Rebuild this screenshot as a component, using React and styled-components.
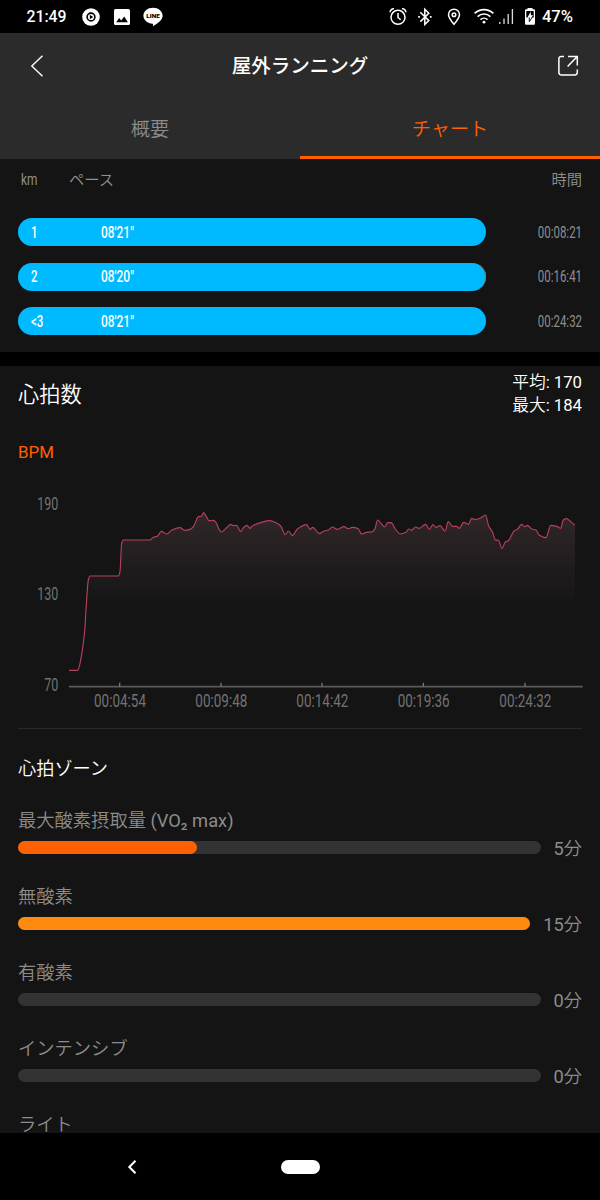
import React from "react";

//SC
import styled, { createGlobalStyle } from "styled-components";

const GlobalStyle = createGlobalStyle`
  * {
    box-sizing: border-box;
  }
  body {
    margin: 0;
    background-color: #000;
    font-family: Roboto, "Noto Sans CJK JP DemiLight", "Noto Sans CJK JP", sans-serif;
  }
`;

const Screen = styled.div`
  display: flex;
  flex-direction: column;
  width: 600px;
  height: 1200px;
  overflow: hidden;
  background-color: #141414;
  color: #fff;
`;

//STATUS BAR
const StatusBar = styled.div`
  display: flex;
  align-items: center;
  justify-content: space-between;
  flex: none;
  height: 33px;
  padding: 1px 27px 0 26.5px;
  background-color: #000;
`;

const StatusGroup = styled.div`
  display: flex;
  align-items: center;
`;

const StatusText = styled.span`
  margin-left: ${(props) => props.$gap || 0}px;
  font-size: ${(props) => props.$size || 15.8}px;
  font-weight: 500;
  line-height: 20px;
`;

const StatusIcon = styled.svg`
  display: block;
  width: ${(props) => props.width}px;
  height: 20px;
  margin-left: ${(props) => props.$gap || 0}px;
`;

//HEADER
const Header = styled.div`
  flex: none;
  height: 126px;
  background-color: #2b2b2b;
`;

const TitleBar = styled.div`
  display: flex;
  align-items: center;
  justify-content: space-between;
  height: 65px;
  padding: 0 20px;
`;

const Title = styled.h1`
  margin: 0;
  padding-top: 2px;
  font-family: Roboto, "Noto Sans CJK JP", sans-serif;
  font-size: 19.5px;
  font-weight: 500;
  line-height: 26px;
`;

const Tabs = styled.div`
  display: flex;
  height: 61px;
`;

const Tab = styled.div`
  display: flex;
  align-items: center;
  justify-content: center;
  flex: 1;
  padding-top: 1px;
  font-size: 19.2px;
  color: ${(props) => (props.$active ? "#ff6100" : "#8c8c8c")};
  border-bottom: 3px solid ${(props) => (props.$active ? "#ff6100" : "#2b2b2b")};
`;

//LAPS
const Laps = styled.div`
  flex: none;
  height: 192.5px;
  padding: 0 18px;
`;

const LapHead = styled.div`
  display: flex;
  align-items: center;
  height: 38px;
  margin-bottom: 21.3px;
  padding-left: 3px;
  font-size: 15.3px;
  color: #909090;
`;

const HeadKm = styled.div`
  width: 48px;
  padding-top: 3px;
`;

const HeadTime = styled.div`
  margin-left: auto;
`;

const LapRow = styled.div`
  display: flex;
  align-items: center;
  justify-content: space-between;
  margin-bottom: 16.5px;
`;

const LapBar = styled.div`
  display: flex;
  align-items: center;
  width: 467.5px;
  height: 28px;
  padding-left: 13px;
  border-radius: 14px;
  background-color: #00baff;
  ${(props) => props.$short && "box-shadow: inset -1px 0 0 #777;"}
`;

const LapIndex = styled.div`
  width: 70px;
`;

// narrow digits, squeezed from the regular face
const Narrow = styled.span`
  display: inline-block;
  padding-top: 1px;
  font-size: ${(props) => props.$size || 16.6}px;
  font-weight: ${(props) => props.$weight || 400};
  line-height: 20px;
  color: ${(props) => props.$color || "#fff"};
  transform: scaleX(${(props) => props.$scale || 0.69});
  transform-origin: ${(props) => props.$origin || "left"} center;
`;

const Separator = styled.div`
  flex: none;
  height: 14px;
  background-color: #000;
`;

//HEART RATE
const HeartRate = styled.div`
  display: flex;
  flex-direction: column;
  flex: 1;
  min-height: 0;
  overflow: hidden;
`;

const HeartHead = styled.div`
  display: flex;
  justify-content: space-between;
  flex: none;
  height: 74px;
  padding: 6.5px 18px 0;
`;

const HeartTitle = styled.h2`
  margin: 8px 0 0;
  font-size: 21.2px;
  font-weight: 400;
  line-height: 30px;
`;

const Stats = styled.div`
  font-size: 16.7px;
  line-height: 22.6px;
  text-align: right;
`;

const Unit = styled.div`
  flex: none;
  height: 40.5px;
  padding-left: 18px;
  font-size: 16.9px;
  line-height: 24px;
  color: #ff6100;
`;

const Chart = styled.svg`
  display: block;
  flex: none;
  width: 600px;
  height: 240px;
`;

const Divider = styled.div`
  flex: none;
  height: 1px;
  margin: 8px 18px 0;
  background-color: #292929;
`;

//ZONES
const Zones = styled.div`
  flex: none;
  padding: 26.5px 18px 0;
`;

const ZonesTitle = styled.h3`
  margin: 0 0 25px;
  font-size: 18.2px;
  font-weight: 400;
  line-height: 26px;
`;

const Zone = styled.div`
  height: 76px;
`;

const ZoneLabel = styled.div`
  height: 27px;
  font-size: 18.3px;
  line-height: 27px;
  color: #8c8c8c;
`;

const ZoneLine = styled.div`
  display: flex;
  align-items: center;
  height: 26px;
  margin-top: 2px;
`;

const Track = styled.div`
  flex: 1;
  height: 12.5px;
  margin-top: -2.5px;
  border-radius: 7px;
  background-color: #333;
`;

const Fill = styled.div`
  height: 100%;
  border-radius: 7px;
  background-color: ${(props) => props.color};
`;

const ZoneValue = styled.div`
  margin-left: 13px;
  font-size: 18.2px;
  line-height: 26px;
  color: #8c8c8c;
`;

//NAVIGATION
const NavBar = styled.div`
  display: grid;
  grid-template-columns: 264px 72px 264px;
  align-items: center;
  justify-items: center;
  flex: none;
  height: 67px;
  background-color: #000;
`;

const HomePill = styled.div`
  width: 39px;
  height: 14px;
  border-radius: 7px;
  background-color: #fff;
`;

const laps = [
  { index: "1", pace: "08'21\"", time: "00:08:21" },
  { index: "2", pace: "08'20\"", time: "00:16:41", short: true },
  { index: "<3", pace: "08'21\"", time: "00:24:32" },
];

const zones = [
  { label: "最大酸素摂取量 (VO₂ max)", value: "5分", percent: 34.2, color: "#ff6100" },
  { label: "無酸素", value: "15分", percent: 100, color: "#ff8a10" },
  { label: "有酸素", value: "0分", percent: 0 },
  { label: "インテンシブ", value: "0分", percent: 0 },
  { label: "ライト" },
];

// the chart is drawn in a 1800 x 720 box, three units for each pixel
const points = [
  [207, 571], [233, 571], [240, 550], [254, 455], [258, 390], [265, 300], [270, 288],
  [355, 288], [360, 275], [365, 190], [370, 180], [450, 180], [460, 172], [472, 169],
  [484, 154], [500, 162], [516, 150], [540, 143], [554, 151], [570, 148], [580, 140],
  [595, 110], [605, 108], [611, 98], [616, 104], [627, 122], [640, 121], [648, 127],
  [657, 148], [664, 156], [677, 146], [692, 133], [700, 137], [710, 136], [722, 155],
  [730, 143], [741, 136], [750, 145], [758, 137], [785, 127], [808, 122], [825, 127],
  [842, 138], [856, 164], [865, 153], [877, 167], [892, 147], [920, 134], [930, 148],
  [938, 142], [958, 161], [970, 154], [985, 150], [997, 141], [1012, 148], [1032, 140],
  [1045, 146], [1057, 142], [1075, 146], [1084, 162], [1100, 157], [1115, 156],
  [1124, 148], [1133, 120], [1143, 130], [1154, 141], [1163, 128], [1173, 128],
  [1188, 150], [1201, 162], [1218, 157], [1226, 147], [1234, 151], [1247, 141],
  [1257, 145], [1277, 133], [1288, 148], [1299, 134], [1308, 142], [1320, 137],
  [1335, 153], [1345, 125], [1358, 139], [1370, 139], [1378, 145], [1391, 127],
  [1405, 133], [1415, 115], [1425, 119], [1440, 115], [1457, 105], [1466, 138],
  [1477, 155], [1487, 181], [1495, 180], [1506, 205], [1516, 186], [1525, 182],
  [1543, 152], [1552, 148], [1565, 133], [1574, 140], [1582, 136], [1595, 147],
  [1608, 150], [1617, 165], [1638, 173], [1652, 136], [1670, 139], [1682, 145],
  [1690, 120], [1700, 116], [1710, 123], [1725, 135],
];

const slope = (i) => {
  const prev = points[i - 1];
  const cur = points[i];
  const next = points[i + 1];
  if (!prev || !next) return 0;
  const before = (cur[1] - prev[1]) / (cur[0] - prev[0]);
  const after = (next[1] - cur[1]) / (next[0] - cur[0]);
  if (before * after <= 0) return 0;
  return (2 * before * after) / (before + after);
};

const line = points
  .map(([x, y], i) => {
    if (i === 0) return `M${x} ${y}`;
    const [px, py] = points[i - 1];
    const third = (x - px) / 3;
    return `C${px + third} ${py + slope(i - 1) * third} ${x - third} ${y - slope(i) * third} ${x} ${y}`;
  })
  .join("");

const ticks = [
  { x: 359, label: "00:04:54" },
  { x: 663, label: "00:09:48" },
  { x: 966, label: "00:14:42" },
  { x: 1270, label: "00:19:36" },
  { x: 1575, label: "00:24:32" },
];

const levels = [
  { y: 91, x: 112, width: 63, label: "190" },
  { y: 361, x: 112, width: 63, label: "130" },
  { y: 632, x: 133, width: 42, label: "70" },
];

const HeartChart = () => (
  <Chart viewBox="0 0 1800 720">
    <defs>
      <linearGradient id="area" gradientUnits="userSpaceOnUse" x1="0" y1="98" x2="0" y2="390">
        <stop offset="0" stopColor="#302729" />
        <stop offset="1" stopColor="#141414" />
      </linearGradient>
    </defs>
    <path d={`${line}V390H260Z`} fill="url(#area)" />
    <path d={line} fill="none" stroke="#b9405a" strokeWidth="3.4" strokeLinejoin="round" />
    <path d="M207 620H1748" stroke="#5a5a5a" strokeWidth="5" />
    {ticks.map((tick) => (
      <g key={tick.label}>
        <path d={`M${tick.x} 608v12`} stroke="#777" strokeWidth="4" />
        <text
          x={tick.x - 77}
          y="680"
          fontSize="57"
          fill="#727272"
          textLength="156"
          lengthAdjust="spacingAndGlyphs"
        >
          {tick.label}
        </text>
      </g>
    ))}
    {levels.map((level) => (
      <text
        key={level.label}
        x={level.x}
        y={level.y}
        fontSize="57"
        fill="#727272"
        textLength={level.width}
        lengthAdjust="spacingAndGlyphs"
      >
        {level.label}
      </text>
    ))}
  </Chart>
);

const StatusLeft = () => (
  <StatusGroup>
    <StatusText>21:49</StatusText>
    <StatusIcon width={18} $gap={15.5} viewBox="0 0 18 20">
      <circle cx="9" cy="10" r="8.8" fill="#fff" />
      <circle cx="9" cy="10" r="3.9" fill="none" stroke="#000" strokeWidth="1.6" />
      <path d="M7.8 7.8v4.4l3.4-2.2z" fill="#000" />
    </StatusIcon>
    <StatusIcon width={16} $gap={14} viewBox="0 0 16 20">
      <rect x="0" y="2" width="16" height="16" rx="1.6" fill="#fff" />
      <path d="M2.2 15.2l3-4.1 2 2.5 3-4 3.7 5.6z" fill="#000" />
    </StatusIcon>
    <StatusIcon width={20} $gap={12.5} viewBox="0 0 20 20">
      <path
        d="M10 .8c5.3 0 9.6 3.5 9.6 7.9 0 3.7-4.1 7.5-9.6 10.5-.3-.5.5-2.2-.3-2.5C4.5 16.4.4 13 .4 8.7.4 4.3 4.7.8 10 .8z"
        fill="#fff"
      />
      <text x="3.3" y="10.8" fontSize="5.4" fontWeight="900" textLength="13.4" lengthAdjust="spacingAndGlyphs">
        LINE
      </text>
    </StatusIcon>
  </StatusGroup>
);

const StatusRight = () => (
  <StatusGroup>
    <StatusIcon width={18} viewBox="0 0 18 20" fill="none" stroke="#fff" strokeWidth="1.5">
      <circle cx="9" cy="10.3" r="7" />
      <path d="M9 6v4.5l2.7 2.3M1 5.2C1.2 3 3 1.5 5 1.8M17 5.2C16.8 3 15 1.5 13 1.8" />
    </StatusIcon>
    <StatusIcon width={16} $gap={10} viewBox="0 0 16 20" fill="none" stroke="#fff" strokeWidth="1.5">
      <path d="M3.3 5.2l8.5 8.4-4 3.9V2.3l4 3.9-8.5 8.4" />
      <path d="M1.2 9.9h1.7M12.9 9.9h1.7" strokeWidth="1.7" />
    </StatusIcon>
    <StatusIcon width={14} $gap={13.5} viewBox="0 0 14 20" fill="none" stroke="#fff" strokeWidth="1.5">
      <path d="M7 17.3C4 13.7 1.5 10.6 1.5 7.7a5.5 5.5 0 0 1 11 0c0 2.9-2.5 6-5.5 9.6z" />
      <circle cx="7" cy="7.7" r="1.8" />
    </StatusIcon>
    <StatusIcon width={20} $gap={13.5} viewBox="0 0 20 20" fill="none" stroke="#fff" strokeWidth="1.6">
      <path d="M.6 6.4c5.4-5 13.4-5 18.8 0M3.6 9.6c3.7-3.4 9.1-3.4 12.8 0M6.5 12.6c2-1.9 5-1.9 7 0" />
      <circle cx="10" cy="15.2" r="1.4" fill="#fff" stroke="none" />
    </StatusIcon>
    <StatusIcon width={15} $gap={5} viewBox="0 0 15 20" fill="none" stroke="#ddd" strokeWidth="1.3">
      <path d="M.8 15v2M5 11.5V17M9.2 7v10M13.4 2v15" />
    </StatusIcon>
    <StatusIcon width={12} $gap={9.5} viewBox="0 0 12 20">
      <path
        d="M3.5 1h5v1.3h1.2c.8 0 1.3.5 1.3 1.3v12.9c0 .8-.5 1.3-1.3 1.3H2.3c-.8 0-1.3-.5-1.3-1.3V3.6c0-.8.5-1.3 1.3-1.3h1.2z"
        fill="#fff"
      />
      <path d="M2.3 4h7.4v6.5H2.3z" fill="#000" />
      <path d="M6.8 4.6L3.3 10.8h2v2.4h1L9 8.2H6.8z" fill="#fff" />
      <path d="M5.3 10.5v4.2l3.4-5.2" fill="none" stroke="#000" strokeWidth=".9" />
    </StatusIcon>
    <StatusText $gap={6} $size={16.6}>47%</StatusText>
  </StatusGroup>
);

const App = () => {
  return (
    <Screen>
      <GlobalStyle />
      <StatusBar>
        <StatusLeft />
        <StatusRight />
      </StatusBar>

      <Header>
        <TitleBar>
          <svg width="24" height="24" viewBox="0 0 24 24" fill="none" stroke="#fff" strokeWidth="1.4">
            <path d="M22.5 1.7L11.8 11.9l10.7 10.4" />
          </svg>
          <Title>屋外ランニング</Title>
          <svg width="24" height="24" viewBox="0 0 24 24" fill="none" stroke="#fff" strokeWidth="1.5">
            <path d="M8 2.4H5.2a2.3 2.3 0 0 0-2.3 2.3v13.9a2.3 2.3 0 0 0 2.3 2.3H19a2.3 2.3 0 0 0 2.3-2.3v-3.1" />
            <path d="M12 2.4h9.3v9.2M21 2.7l-9.4 9.7" />
          </svg>
        </TitleBar>
        <Tabs>
          <Tab>概要</Tab>
          <Tab $active>チャート</Tab>
        </Tabs>
      </Header>

      <Laps>
        <LapHead>
          <HeadKm>
            <Narrow $color="#909090" $size={16.5} $scale={0.72}>km</Narrow>
          </HeadKm>
          <div>ペース</div>
          <HeadTime>時間</HeadTime>
        </LapHead>
        {laps.map((lap) => (
          <LapRow key={lap.index}>
            <LapBar $short={lap.short}>
              <LapIndex>
                <Narrow $weight={500}>{lap.index}</Narrow>
              </LapIndex>
              <Narrow $weight={500} $scale={0.72}>{lap.pace}</Narrow>
            </LapBar>
            <Narrow $color="#8f8f8f" $origin="right">{lap.time}</Narrow>
          </LapRow>
        ))}
      </Laps>

      <Separator />

      <HeartRate>
        <HeartHead>
          <HeartTitle>心拍数</HeartTitle>
          <Stats>
            <div>平均: 170</div>
            <div>最大: 184</div>
          </Stats>
        </HeartHead>
        <Unit>BPM</Unit>
        <HeartChart />
        <Divider />
        <Zones>
          <ZonesTitle>心拍ゾーン</ZonesTitle>
          {zones.map((zone) => (
            <Zone key={zone.label}>
              <ZoneLabel>{zone.label}</ZoneLabel>
              {zone.value && (
                <ZoneLine>
                  <Track>
                    {zone.percent > 0 && <Fill color={zone.color} style={{ width: `${zone.percent}%` }} />}
                  </Track>
                  <ZoneValue>{zone.value}</ZoneValue>
                </ZoneLine>
              )}
            </Zone>
          ))}
        </Zones>
      </HeartRate>

      <NavBar>
        <svg width="12" height="16" viewBox="0 0 12 16" fill="none" stroke="#fff" strokeWidth="2">
          <path d="M9.5 1.7L3.3 8l6.2 6.3" />
        </svg>
        <HomePill />
      </NavBar>
    </Screen>
  );
};

export default App;
